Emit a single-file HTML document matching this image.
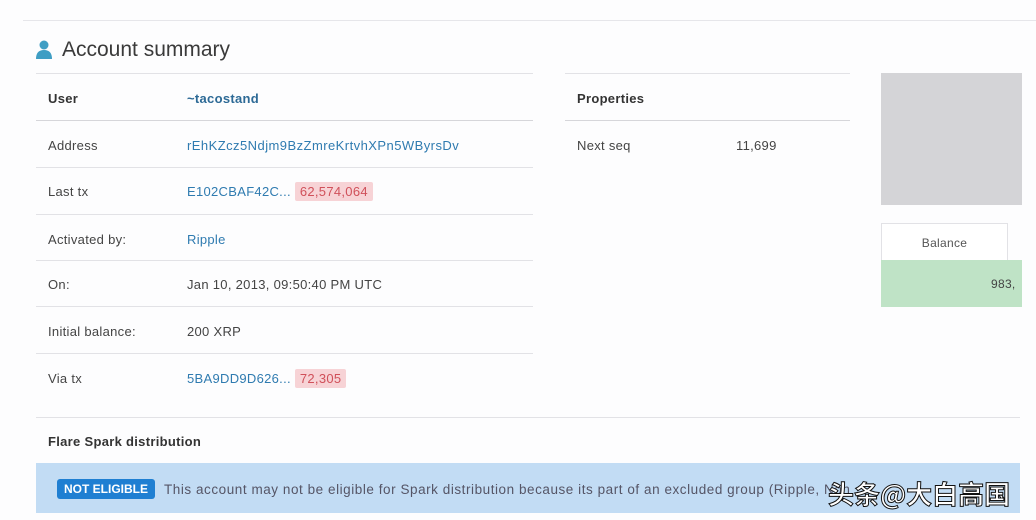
<!DOCTYPE html>
<html><head><meta charset="utf-8"><style>
*{margin:0;padding:0;box-sizing:border-box}
body{width:1036px;height:520px;background:#fdfdfe;font-family:"Liberation Sans","Noto Sans CJK SC",sans-serif;font-size:13px;color:#444;position:relative;overflow:hidden}
.a{position:absolute;white-space:nowrap;letter-spacing:0.3px}
.hl{position:absolute;height:1px;background:#e2e2e6}
.lnk{color:#2f7bb0}
.b{font-weight:bold;color:#333}
.red{background:#f7d3d6;color:#d0505a;padding:2px 5px;border-radius:2px}
</style></head><body>
<div class="hl" style="left:23px;top:20px;width:1013px;background:#e6e6ea"></div>
<svg class="a" style="left:35px;top:40px" width="18" height="20" viewBox="0 0 18 20"><circle cx="9" cy="5" r="4.5" fill="#3f9ec4"/><path d="M1 19 Q1 10 9 10 Q17 10 17 19 Z" fill="#3f9ec4"/></svg>
<div class="a" style="left:62px;top:38px;font-size:21px;color:#3a3a3a;letter-spacing:0">Account summary</div>
<div class="hl" style="left:36px;top:73px;width:497px"></div>
<div class="a b" style="left:48px;top:91px">User</div><div class="a lnk b" style="left:187px;top:91px;color:#2d6a96">~tacostand</div>
<div class="hl" style="left:36px;top:120px;width:497px;background:#d6d6da"></div>
<div class="a" style="left:48px;top:138px">Address</div><div class="a lnk" style="left:187px;top:138px;letter-spacing:0.45px">rEhKZcz5Ndjm9BzZmreKrtvhXPn5WByrsDv</div>
<div class="hl" style="left:36px;top:167px;width:497px"></div>
<div class="a" style="left:48px;top:184px">Last tx</div><div class="a lnk" style="left:187px;top:184px">E102CBAF42C... <span class="red">62,574,064</span></div>
<div class="hl" style="left:36px;top:214px;width:497px"></div>
<div class="a" style="left:48px;top:232px">Activated by:</div><div class="a lnk" style="left:187px;top:232px">Ripple</div>
<div class="hl" style="left:36px;top:260px;width:497px"></div>
<div class="a" style="left:48px;top:277px">On:</div><div class="a" style="left:187px;top:277px">Jan 10, 2013, 09:50:40 PM UTC</div>
<div class="hl" style="left:36px;top:306px;width:497px"></div>
<div class="a" style="left:48px;top:324px">Initial balance:</div><div class="a" style="left:187px;top:324px">200 XRP</div>
<div class="hl" style="left:36px;top:353px;width:497px"></div>
<div class="a" style="left:48px;top:371px">Via tx</div><div class="a lnk" style="left:187px;top:371px">5BA9DD9D626... <span class="red">72,305</span></div>
<div class="hl" style="left:36px;top:417px;width:984px"></div>
<div class="a b" style="left:48px;top:434px">Flare Spark distribution</div>
<div class="a" style="left:36px;top:463px;width:984px;height:50px;background:#c2dcf4"></div>
<div class="a" style="left:57px;top:479px;width:98px;height:20px;background:#1f7fd2;border-radius:3px;color:#fff;font-weight:bold;font-size:12px;line-height:20px;text-align:center;letter-spacing:0">NOT ELIGIBLE</div>
<div class="a" style="left:164px;top:482px;color:#556;font-size:13.5px;letter-spacing:0.55px">This account may not be eligible for Spark distribution because its part of an excluded group (Ripple, Non</div>
<div class="a" style="left:828px;top:475px;font-size:26px;color:#fff;font-family:'Noto Sans CJK SC',sans-serif;-webkit-text-stroke:1px #111;font-weight:bold;letter-spacing:0">头条@大白高国</div>
<div class="hl" style="left:565px;top:73px;width:285px"></div>
<div class="a b" style="left:577px;top:91px">Properties</div>
<div class="hl" style="left:565px;top:120px;width:285px;background:#d6d6da"></div>
<div class="a" style="left:577px;top:138px">Next seq</div><div class="a" style="left:736px;top:138px">11,699</div>
<div class="a" style="left:881px;top:73px;width:141px;height:132px;background:#d4d4d7"></div>
<div class="a" style="left:881px;top:223px;width:127px;height:38px;border:1px solid #e2e2e6;border-bottom:none;background:#fff;text-align:center;line-height:38px;font-size:12px;color:#555">Balance</div>
<div class="a" style="left:881px;top:260px;width:141px;height:47px;background:#bfe3c6"></div>
<div class="a" style="left:991px;top:277px;font-size:12px;color:#444">983,</div>
</body></html>
